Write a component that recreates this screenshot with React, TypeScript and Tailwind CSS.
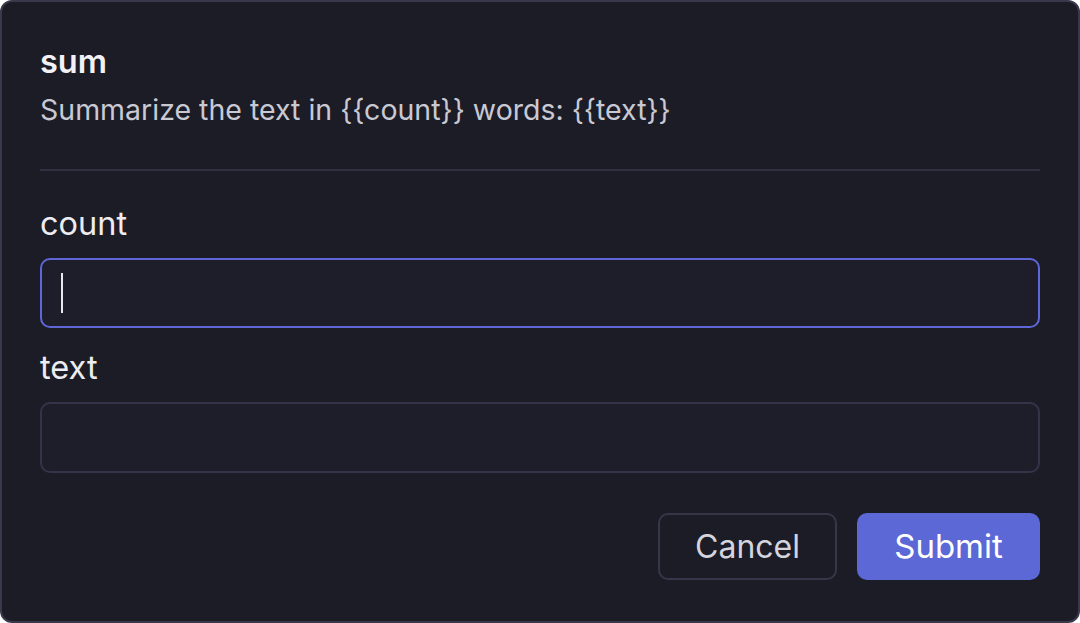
import React from "react";

const font = { fontFamily: "Inter, 'Noto Sans', sans-serif" };

export default function App() {
  return (
    <div className="w-[1080px] h-[623px] bg-white" style={font}>
      {/* Dialog */}
      <div className="flex flex-col h-full rounded-[12px] border-2 border-[#383a4c] bg-[#1c1c26] px-[38px] pt-[42px]">
        {/* Header */}
        <h1 className="text-[32.5px] leading-[36px] font-semibold text-[#f2f2f6]">sum</h1>
        <p className="mt-[14px] text-[28.5px] leading-[32px] text-[#c9c9d4]">
          Summarize the text in {"{{count}}"} words: {"{{text}}"}
        </p>

        <div className="mt-[43px] h-[2px] bg-[#2f3042]" />

        {/* Fields */}
        <label className="mt-[35px] text-[32.5px] leading-[36px] text-[#ececf2]">count</label>
        <div className="relative mt-[16px]">
          <input
            className="w-full h-[70px] rounded-[10px] border-2 border-[#5f66d8] bg-[#1e1e2b] px-[20px] text-[24px] text-white outline-none caret-transparent"
            aria-label="count"
          />
          <span className="absolute left-[21px] top-[15px] w-[2px] h-[40px] bg-[#e8e8ee]" />
        </div>

        <label className="mt-[22px] text-[32.5px] leading-[36px] text-[#ececf2]">text</label>
        <input
          className="mt-[16px] w-full h-[71px] rounded-[10px] border-2 border-[#33344a] bg-[#1e1e2b] px-[20px] text-[24px] text-white outline-none"
          aria-label="text"
        />

        {/* Actions */}
        <div className="mt-[40px] flex justify-end gap-[20px]">
          <button className="w-[179px] h-[67px] rounded-[10px] border-2 border-[#353648] text-[32px] text-[#d4d4de]">
            Cancel
          </button>
          <button className="w-[183px] h-[67px] rounded-[10px] bg-[#5b68d6] text-[33px] text-white">
            Submit
          </button>
        </div>
      </div>
    </div>
  );
}
